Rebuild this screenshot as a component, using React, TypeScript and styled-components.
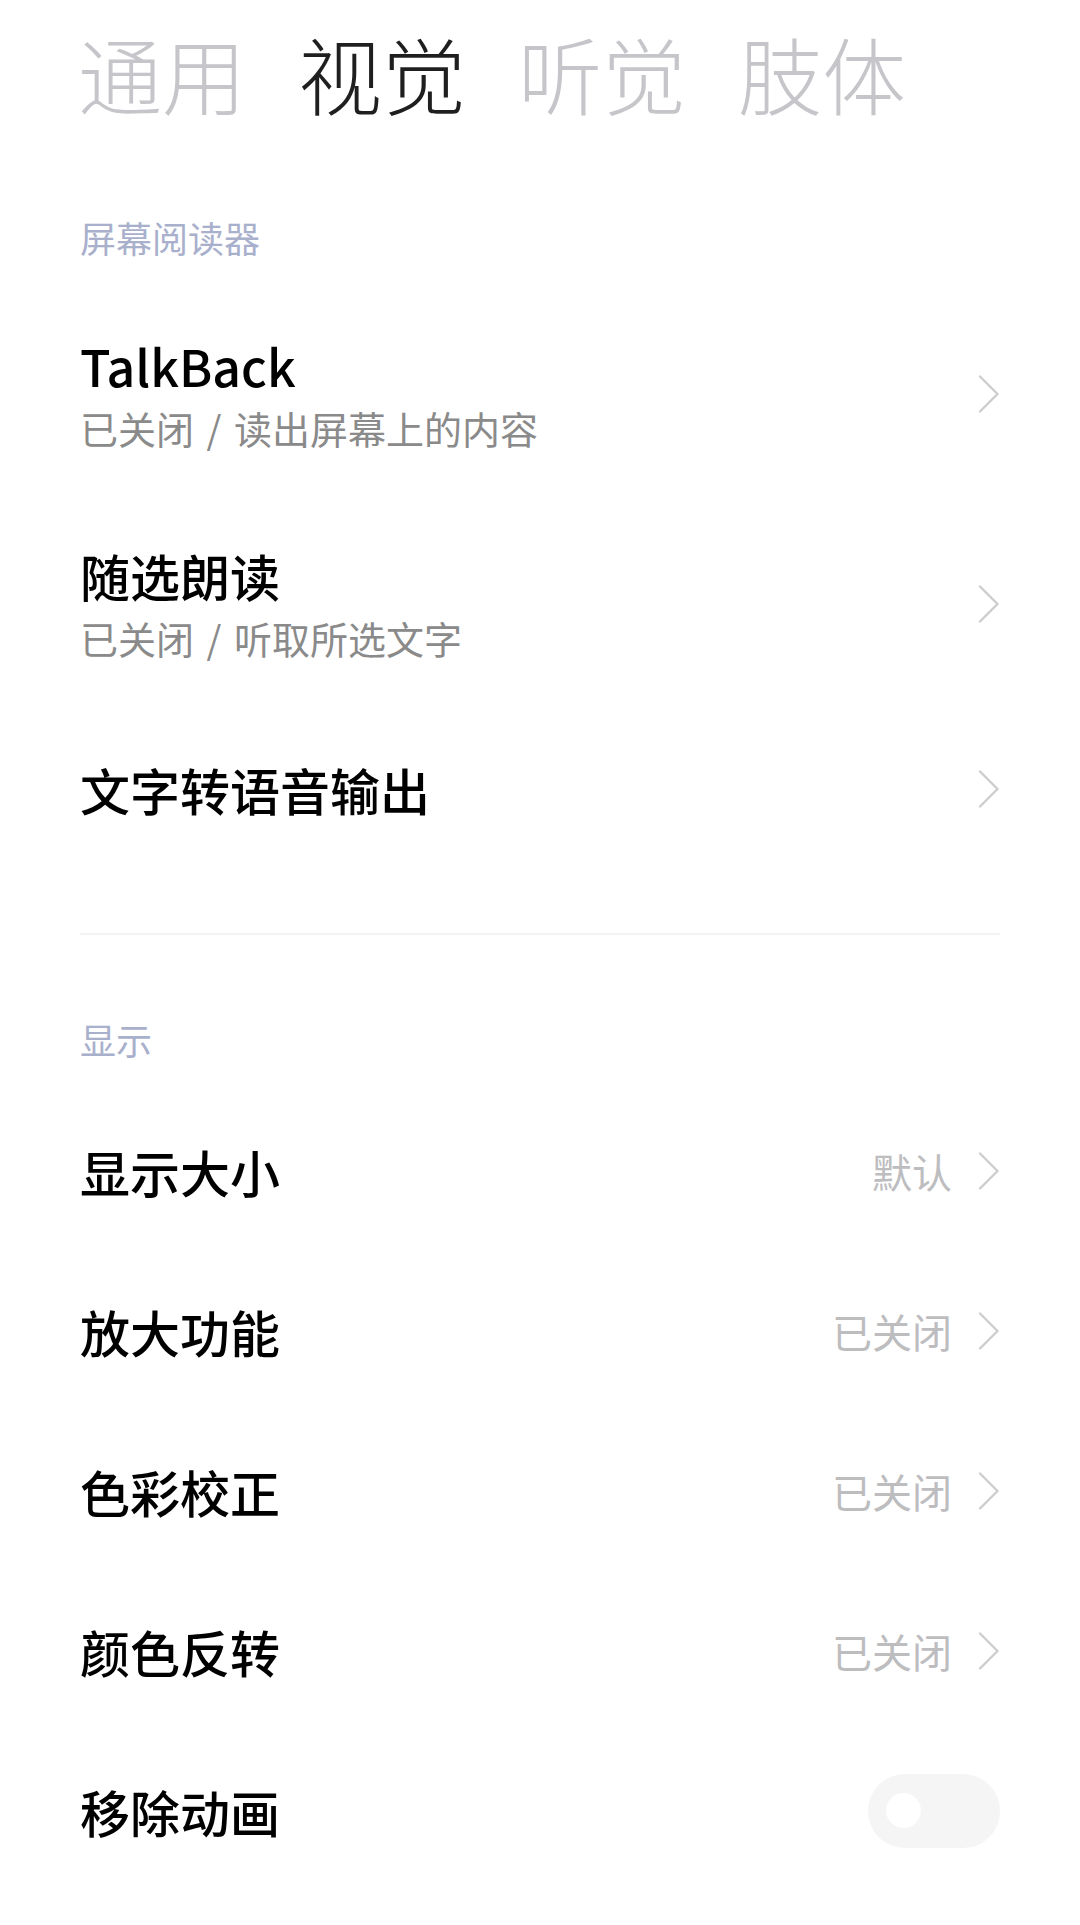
import React from "react";
import styled, { createGlobalStyle } from "styled-components";

const Global = createGlobalStyle`
  html, body { margin: 0; padding: 0; background: #ffffff; }
  body { font-family: "Noto Sans CJK SC", "Noto Sans", sans-serif; -webkit-font-smoothing: antialiased; }
  * { box-sizing: border-box; }
`;

const Page = styled.div`
  width: 1080px;
  min-height: 1925px;
  background: #ffffff;
  padding: 0 80px;
`;

const TabBar = styled.nav`
  display: flex;
  align-items: center;
  gap: 52px;
  height: 146px;
  margin-left: -2px;
`;

const Tab = styled.span<{ $active?: boolean }>`
  font-size: 84px;
  line-height: 1;
  font-weight: 300;
  color: ${(p) => (p.$active ? "#1f1f1f" : "#c6c6ca")};
`;

const SectionHeader = styled.div<{ $top: number }>`
  padding-top: ${(p) => p.$top}px;
  padding-bottom: 28px;
  font-size: 36px;
  line-height: 48px;
  color: #a9b0cc;
`;

const Row = styled.div<{ $h: number }>`
  display: flex;
  align-items: center;
  justify-content: space-between;
  height: ${(p) => p.$h}px;
`;

const TextCol = styled.div`
  display: flex;
  flex-direction: column;
`;

const Title = styled.div`
  font-size: 50px;
  line-height: 62px;
  font-weight: 500;
  color: #000000;
`;

const Sub = styled.div`
  margin-top: 6px;
  font-size: 38px;
  line-height: 52px;
  color: #8a8a8a;
  word-spacing: 4px;
`;

const Right = styled.div`
  display: flex;
  align-items: center;
  gap: 26px;
`;

const Value = styled.span`
  font-size: 40px;
  line-height: 52px;
  color: #bdbdbf;
`;

const Divider = styled.div`
  margin-top: 64px;
  height: 2px;
  background: #f3f3f3;
`;

const Toggle = styled.div`
  position: relative;
  width: 132px;
  height: 74px;
  border-radius: 37px;
  background: #f5f5f6;
`;

const Knob = styled.div`
  position: absolute;
  left: 18px;
  top: 19px;
  width: 35px;
  height: 35px;
  border-radius: 50%;
  background: #ffffff;
`;

const Chevron = () => (
  <svg width="22" height="38" viewBox="0 0 22 38" fill="none">
    <path d="M2 1.5 L19.5 19 L2 36.5" stroke="#cdcdcf" strokeWidth="2.4" strokeLinecap="round" strokeLinejoin="round" />
  </svg>
);

type Item = { title: string; sub?: string; value?: string; toggle?: boolean };

const screenReader: Item[] = [
  { title: "TalkBack", sub: "已关闭 / 读出屏幕上的内容" },
  { title: "随选朗读", sub: "已关闭 / 听取所选文字" },
  { title: "文字转语音输出" },
];

const display: Item[] = [
  { title: "显示大小", value: "默认" },
  { title: "放大功能", value: "已关闭" },
  { title: "色彩校正", value: "已关闭" },
  { title: "颜色反转", value: "已关闭" },
  { title: "移除动画", toggle: true },
];

const SettingRow = ({ item }: { item: Item }) => (
  <Row $h={item.sub ? 210 : 160}>
    <TextCol>
      <Title>{item.title}</Title>
      {item.sub && <Sub>{item.sub}</Sub>}
    </TextCol>
    {item.toggle ? (
      <Toggle>
        <Knob />
      </Toggle>
    ) : (
      <Right>
        {item.value && <Value>{item.value}</Value>}
        <Chevron />
      </Right>
    )}
  </Row>
);

export default function App() {
  return (
    <>
      <Global />
      <Page>
        <TabBar>
          <Tab>通用</Tab>
          <Tab $active>视觉</Tab>
          <Tab>听觉</Tab>
          <Tab>肢体</Tab>
        </TabBar>
        <SectionHeader $top={67}>屏幕阅读器</SectionHeader>
        {screenReader.map((it) => (
          <SettingRow key={it.title} item={it} />
        ))}
        <Divider />
        <SectionHeader $top={80}>显示</SectionHeader>
        {display.map((it) => (
          <SettingRow key={it.title} item={it} />
        ))}
      </Page>
    </>
  );
}
